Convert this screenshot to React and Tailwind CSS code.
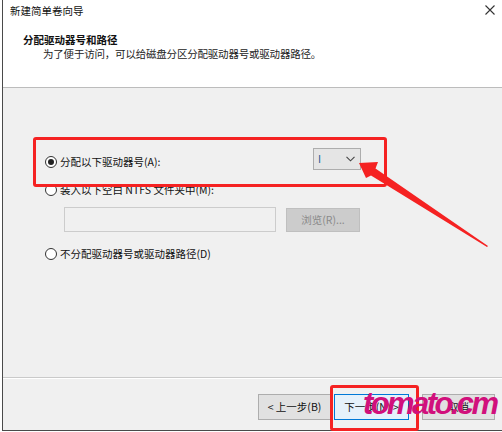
import React from "react";

const font = { fontFamily: '"Noto Sans CJK SC", "Microsoft YaHei", sans-serif' };

function Radio({ checked }) {
  return (
    <span className="w-[12px] h-[12px] rounded-full border border-[#333] bg-white flex items-center justify-center shrink-0">
      {checked && <span className="w-[6px] h-[6px] rounded-full bg-[#222]" />}
    </span>
  );
}

function Btn({ children, primary, className = "" }) {
  return (
    <div
      className={`h-[26px] flex items-center justify-center text-[10.5px] leading-[14px] text-[#111] border ${
        primary ? "bg-[#e5f1fb] border-[#0078d7]" : "bg-[#e1e1e1] border-[#adadad]"
      } ${className}`}
    >
      {children}
    </div>
  );
}

export default function App() {
  return (
    <div className="w-[502px] h-[432px] bg-white pl-[2px] relative overflow-hidden" style={font}>
      <div className="h-[431px] border-l border-b border-[#4a4a4a] flex flex-col">
        {/* header */}
        <div className="h-[88px] bg-white border-b border-[#bcbcbc] relative">
          <div className="pl-[7px] pt-[4px] text-[10.5px] leading-[14px] text-[#111]">新建简单卷向导</div>
          <svg className="absolute left-[482px] top-[5px]" width="10" height="10" viewBox="0 0 10 10">
            <path d="M0.5 0.5 L9.5 9.5 M9.5 0.5 L0.5 9.5" stroke="#333" strokeWidth="1.1" />
          </svg>
          <div className="pl-[20px] pt-[15px] text-[10.5px] leading-[14px] font-bold text-[#111]">
            分配驱动器号和路径
          </div>
          <div className="pl-[40px] text-[10.5px] leading-[14px] text-[#222] tracking-[-0.2px]">
            为了便于访问，可以给磁盘分区分配驱动器号或驱动器路径。
          </div>
        </div>

        {/* body */}
        <div className="flex-1 bg-[#f0f0f0] flex flex-col">
          <div className="flex-1 pl-[42px] pt-[60px] text-[10.5px] leading-[14px] text-[#111]">
            <div className="flex items-start h-[22px]">
              <div className="flex items-center gap-[3px] pt-[7px] w-[268px]">
                <Radio checked />
                <span>分配以下驱动器号(A):</span>
              </div>
              <div className="w-[48px] h-[22px] bg-[#e5e5e5] border border-[#adadad] flex items-center justify-between pl-[4px] pr-[5px]">
                <span className="text-[#2c5d94]">I</span>
                <svg width="9" height="6" viewBox="0 0 9 6">
                  <path d="M0.5 0.8 L4.5 4.8 L8.5 0.8" fill="none" stroke="#444" strokeWidth="1.1" />
                </svg>
              </div>
            </div>
            <div className="flex items-center gap-[3px] mt-[13px]">
              <Radio />
              <span>装入以下空白 NTFS 文件夹中(M):</span>
            </div>
            <div className="flex items-center mt-[10px] pl-[19px] gap-[10px]">
              <div className="w-[212px] h-[25px] bg-[#f0f0f0] border border-[#cccccc]" />
              <div className="w-[74px] h-[24px] bg-[#cccccc] border border-[#bfbfbf] flex items-center justify-center text-[#8a8a8a]">
                浏览(R)...
              </div>
            </div>
            <div className="flex items-center gap-[3px] mt-[15px]">
              <Radio />
              <span>不分配驱动器号或驱动器路径(D)</span>
            </div>
          </div>

          {/* footer */}
          <div className="h-[53px] border-t border-[#cacaca]">
            <div className="h-full border-t border-white flex justify-end pr-[7px] pt-[15px]">
              <Btn className="w-[73px]">&lt; 上一步(B)</Btn>
              <Btn primary className="w-[75px] ml-[3px]">下一步(N) &gt;</Btn>
              <Btn className="w-[73px] ml-[13px]">取消</Btn>
            </div>
          </div>
        </div>
      </div>

      {/* annotations */}
      <div className="absolute left-[33px] top-[137px] w-[354px] h-[50px] border-[3px] border-[#f52222] rounded-[3px] pointer-events-none" />
      <div className="absolute left-[330px] top-[385px] w-[89px] h-[46px] border-[3px] border-[#f52222] rounded-[3px] pointer-events-none" />
      <svg className="absolute left-0 top-0 pointer-events-none" width="502" height="432" viewBox="0 0 502 432">
        <polygon
          points="359,163 378,162 375.5,168.5 488,246 487,247 371,175.5 366,178"
          fill="#f52222"
        />
      </svg>
      <div
        className="absolute left-[363px] top-[384px] text-[31px] leading-[40px] font-bold italic text-[#d1107c] tracking-[-2.6px] pointer-events-none"
        style={{ fontFamily: '"Liberation Sans", Arial, sans-serif' }}
      >
        tomato.cm
      </div>
    </div>
  );
}
